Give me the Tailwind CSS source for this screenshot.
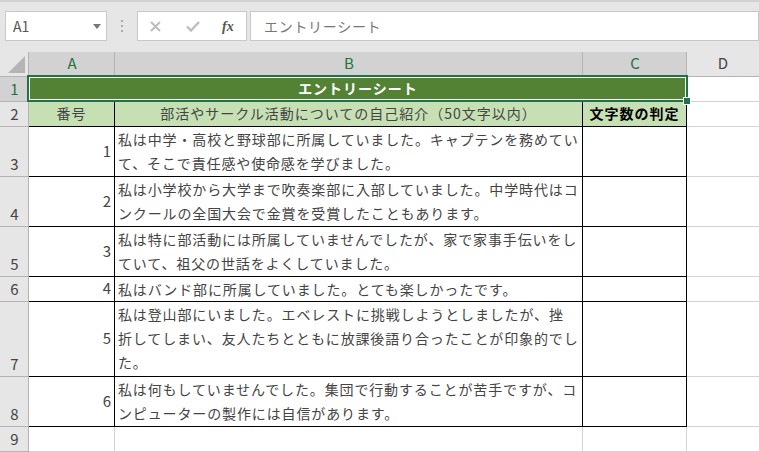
<!DOCTYPE html>
<html lang="ja">
<head>
  <title>エントリーシート</title>
  <meta charset="utf-8">
  <script src="https://cdn.jsdelivr.net/npm/@tailwindcss/browser@4"></script>
</head>
<body class="w-[759px] h-[452px] overflow-hidden bg-white font-['Noto_Sans_CJK_JP','Noto_Sans',sans-serif] text-[14px] text-[#444]">
  <!-- formula bar -->
  <div class="h-[52px] bg-[#e6e6e6] border-t-2 border-[#d2d2d2] pt-[9px] flex items-start">
    <div class="ml-[5px] w-[102px] h-[30px] bg-white border border-[#c8c8c8] flex items-center justify-between pl-[7px] pr-[5px] text-[14px] text-[#555]">
      <span>A1</span>
      <svg width="8" height="5" viewBox="0 0 8 5"><path d="M0 0H8L4 5Z" fill="#777"/></svg>
    </div>
    <div class="w-[30px] h-[30px] flex flex-col items-center justify-center gap-[3px]">
      <span class="w-[2px] h-[2px] bg-[#aaa]"></span><span class="w-[2px] h-[2px] bg-[#aaa]"></span><span class="w-[2px] h-[2px] bg-[#aaa]"></span>
    </div>
    <div class="w-[110px] h-[30px] bg-white border border-[#c8c8c8] flex items-center">
      <svg class="ml-[12px]" width="11" height="11" viewBox="0 0 11 11"><path d="M1 1L10 10M10 1L1 10" stroke="#bdbdbd" stroke-width="2"/></svg>
      <svg class="ml-[25px]" width="14" height="11" viewBox="0 0 14 11"><path d="M1 5.5L5 9.5L13 1" fill="none" stroke="#bdbdbd" stroke-width="2.4"/></svg>
      <span class="ml-[22px] text-[14px] italic font-bold font-['Liberation_Serif',serif] text-[#555]">fx</span>
    </div>
    <div class="ml-[3px] flex-1 h-[30px] bg-white border border-[#c8c8c8] flex items-center pl-[13px] text-[14px] tracking-[0.7px] text-[#777]">エントリーシート</div>
  </div>

  <!-- sheet -->
  <div class="relative grid grid-cols-[29px_86px_468px_104px_72px] grid-rows-[25px_25px_25px_50px_50px_50px_25px_75px_50px_25px] leading-[24px]">
    <!-- column headers -->
    <div class="bg-[#e6e6e6] border-r border-b border-[#b4b4b4] relative overflow-hidden">
      <svg class="absolute right-[3px] bottom-[3px]" width="17" height="17" viewBox="0 0 17 17"><path d="M17 0V17H0Z" fill="#b4b4b4"/></svg>
    </div>
    <div class="bg-[#d2d2d2] border-r border-b border-[#b4b4b4] text-center text-[15px] leading-[22px] pl-[1px] text-[#217346]">A</div>
    <div class="bg-[#d2d2d2] border-r border-b border-[#b4b4b4] text-center text-[15px] leading-[22px] pl-[1px] text-[#217346]">B</div>
    <div class="bg-[#d2d2d2] border-r border-b border-[#b4b4b4] text-center text-[15px] leading-[22px] pl-[1px] text-[#217346]">C</div>
    <div class="bg-[#e6e6e6] border-b border-[#b4b4b4] text-center text-[15px] leading-[22px] text-[#444]">D</div>

    <!-- row 1 -->
    <div class="bg-[#d2d2d2] border-r border-b border-[#b4b4b4] text-[15px] text-[#217346] flex items-end justify-center pl-[1px]">1</div>
    <div class="col-span-3 bg-[#548235] border-b border-[#d4d4d4] text-center text-white font-bold tracking-[1px] leading-[23px]">エントリーシート</div>
    <div class="border-b border-[#d4d4d4]"></div>

    <!-- row 2 -->
    <div class="bg-[#e6e6e6] border-r border-b border-[#b4b4b4] text-[15px] flex items-end justify-center pl-[1px]">2</div>
    <div class="bg-[#c6e0b4] border-r border-b border-black text-center tracking-[1px] leading-[22px]">番号</div>
    <div class="bg-[#c6e0b4] border-r border-b border-black text-center tracking-[1px] leading-[22px]">部活やサークル活動についての自己紹介（50文字以内）</div>
    <div class="bg-[#c6e0b4] border-r border-b border-black text-center font-bold text-black tracking-[1px] leading-[22px]">文字数の判定</div>
    <div class="border-b border-[#d4d4d4]"></div>

    <!-- row 3 -->
    <div class="bg-[#e6e6e6] border-r border-b border-[#b4b4b4] text-[15px] flex items-end justify-center pl-[1px]">3</div>
    <div class="border-r border-b border-black flex items-center justify-end pr-[3px] pb-[2px] text-[15px]">1</div>
    <div class="border-r border-b border-black pl-[3px] tracking-[0.87px] whitespace-nowrap">私は中学・高校と野球部に所属していました。キャプテンを務めてい<br>て、そこで責任感や使命感を学びました。</div>
    <div class="border-r border-b border-black"></div>
    <div class="border-b border-[#d4d4d4]"></div>

    <!-- row 4 -->
    <div class="bg-[#e6e6e6] border-r border-b border-[#b4b4b4] text-[15px] flex items-end justify-center pl-[1px]">4</div>
    <div class="border-r border-b border-black flex items-center justify-end pr-[3px] pb-[2px] text-[15px]">2</div>
    <div class="border-r border-b border-black pl-[3px] tracking-[0.87px] whitespace-nowrap">私は小学校から大学まで吹奏楽部に入部していました。中学時代はコ<br>ンクールの全国大会で金賞を受賞したこともあります。</div>
    <div class="border-r border-b border-black"></div>
    <div class="border-b border-[#d4d4d4]"></div>

    <!-- row 5 -->
    <div class="bg-[#e6e6e6] border-r border-b border-[#b4b4b4] text-[15px] flex items-end justify-center pl-[1px]">5</div>
    <div class="border-r border-b border-black flex items-center justify-end pr-[3px] pb-[2px] text-[15px]">3</div>
    <div class="border-r border-b border-black pl-[3px] tracking-[0.87px] whitespace-nowrap">私は特に部活動には所属していませんでしたが、家で家事手伝いをし<br>ていて、祖父の世話をよくしていました。</div>
    <div class="border-r border-b border-black"></div>
    <div class="border-b border-[#d4d4d4]"></div>

    <!-- row 6 -->
    <div class="bg-[#e6e6e6] border-r border-b border-[#b4b4b4] text-[15px] flex items-end justify-center pl-[1px]">6</div>
    <div class="border-r border-b border-black flex items-center justify-end pr-[3px] pb-[2px] text-[15px]">4</div>
    <div class="border-r border-b border-black pl-[3px] tracking-[0.87px] whitespace-nowrap">私はバンド部に所属していました。とても楽しかったです。</div>
    <div class="border-r border-b border-black"></div>
    <div class="border-b border-[#d4d4d4]"></div>

    <!-- row 7 -->
    <div class="bg-[#e6e6e6] border-r border-b border-[#b4b4b4] text-[15px] flex items-end justify-center pl-[1px]">7</div>
    <div class="border-r border-b border-black flex items-center justify-end pr-[3px] pb-[2px] text-[15px]">5</div>
    <div class="border-r border-b border-black pl-[3px] tracking-[0.87px] whitespace-nowrap">私は登山部にいました。エベレストに挑戦しようとしましたが、挫<br>折してしまい、友人たちとともに放課後語り合ったことが印象的でし<br>た。</div>
    <div class="border-r border-b border-black"></div>
    <div class="border-b border-[#d4d4d4]"></div>

    <!-- row 8 -->
    <div class="bg-[#e6e6e6] border-r border-b border-[#b4b4b4] text-[15px] flex items-end justify-center pl-[1px]">8</div>
    <div class="border-r border-b border-black flex items-center justify-end pr-[3px] pb-[2px] text-[15px]">6</div>
    <div class="border-r border-b border-black pl-[3px] tracking-[0.87px] whitespace-nowrap">私は何もしていませんでした。集団で行動することが苦手ですが、コ<br>ンピューターの製作には自信があります。</div>
    <div class="border-r border-b border-black"></div>
    <div class="border-b border-[#d4d4d4]"></div>

    <!-- row 9 -->
    <div class="bg-[#e6e6e6] border-r border-b border-[#b4b4b4] text-[15px] flex items-end justify-center pl-[1px]">9</div>
    <div class="border-r border-b border-[#d4d4d4]"></div>
    <div class="border-r border-b border-[#d4d4d4]"></div>
    <div class="border-r border-b border-[#d4d4d4]"></div>
    <div class="border-b border-[#d4d4d4]"></div>

    <!-- selection outline -->
    <div class="absolute left-[27px] top-[23px] w-[661px] h-[27px] border-2 border-[#217346] pointer-events-none">
      <div class="w-full h-full border border-white"></div>
      <div class="absolute -right-[4px] -bottom-[4px] w-[6px] h-[6px] bg-[#217346] outline outline-1 outline-white"></div>
    </div>
  </div>
</body>
</html>
